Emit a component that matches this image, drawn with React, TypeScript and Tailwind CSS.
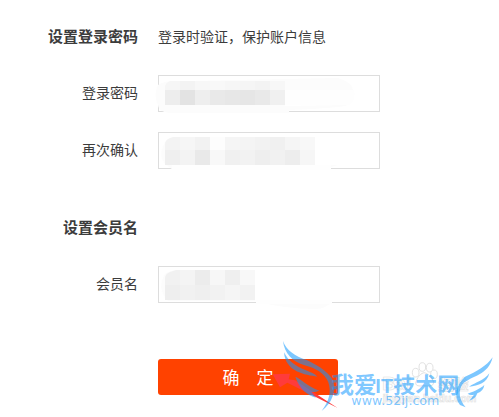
import { useId } from 'react';

type Block = [x: number, y: number, w: number, h: number, fill: string];

const shades = (y: number, h: number, fills: string[]): Block[] =>
  fills.map((fill, i) => [7 + i * 15, y, 15, h, fill]);

const passwordBlocks: Block[] = [
  ...shades(6, 9, ['#f6f6f6', '#f3f3f3', '#f7f7f7', '#f8f8f8', '#f6f6f6', '#f5f5f5', '#f3f3f3', '#f7f7f7']),
  ...shades(15, 15, ['#ededed', '#e3e3e3', '#eeeeee', '#e9e9e9', '#e7e7e7', '#e6e6e6', '#e9e9e9', '#f0f0f0']),
];
const confirmBlocks: Block[] = [
  ...shades(5, 13, ['#f3f3f3', '#f6f6f6', '#f2f2f2', '#fdfdfd', '#f5f5f5', '#f4f4f4', '#f2f2f2', '#f0f0f0', '#f5f5f5', '#f8f8f8']),
  ...shades(18, 15, ['#efefef', '#f3f3f3', '#e9e9e9', '#f8f8f8', '#f0f0f0', '#f2f2f2', '#eeeeee', '#f1f1f1', '#ededed', '#f6f6f6']),
];
const memberBlocks: Block[] = [
  ...shades(4, 15, ['#f1f1f1', '#f4f4f4', '#ececec', '#f7f7f7', '#efefef', '#f8f8f8']),
  ...shades(19, 15, ['#eeeeee', '#f1f1f1', '#efefef', '#f2f2f2', '#f5f5f5', '#f2f2f2']),
];

interface FieldProps {
  label: string;
  type: string;
  smudge: string;
  cover: string;
  blocks: Block[];
}

function Field({ label, type, smudge, cover, blocks }: FieldProps) {
  const id = useId();
  return (
    <div className="flex items-center gap-5">
      <label htmlFor={id} className="w-[138px] shrink-0 pb-1 text-right">{label}</label>
      <div className="relative w-full max-w-[222px]">
        <input id={id} type={type} className="block h-[37px] w-full border border-[#dddddd] bg-white px-2 outline-none" />
        <svg viewBox="0 0 222 37" width="222" height="37" className="pointer-events-none absolute top-0 left-0 overflow-visible" aria-hidden="true">
          <path d={smudge} fill="#fcfcfc" />
          <path d={cover} fill="#fefefe" />
          <clipPath id={id + 'c'}>
            <path d="M7 40V12Q7 8 12 6L18 4H222V40Z" />
          </clipPath>
          <g clipPath={'url(#' + id + 'c)'} shapeRendering="crispEdges">
            {blocks.map(([x, y, w, h, fill], i) => (
              <rect key={i} x={x} y={y} width={w} height={h} fill={fill} />
            ))}
          </g>
        </svg>
      </div>
    </div>
  );
}

function Watermark() {
  return (
    <svg viewBox="0 0 687 261" width="229" height="87" className="pointer-events-none absolute top-[330px] left-[270px]" aria-hidden="true">
      <path d="M8 133L60 131L56 148L75 151L203 234L112 188L52 158L30 172Z" fill="#ff3b3b" />
      <g fill="#fff" stroke="#e2e2e2" strokeWidth="3">
        <ellipse cx="437" cy="128" rx="10" ry="13" />
        <ellipse cx="457" cy="111" rx="10" ry="13" />
        <ellipse cx="479" cy="113" rx="10" ry="13" />
        <ellipse cx="492" cy="133" rx="10" ry="13" />
        <path d="M462 128C445 133 439 151 437 160Q438 171 462 167Q490 172 491 158C488 145 475 130 462 128Z" />
      </g>
      <g fill="#fff" stroke="#e2e2e2" strokeWidth="2" fontFamily='"Liberation Sans", "Noto Sans CJK SC", sans-serif' fontWeight="700">
        <text x="337" y="180" fontSize="56">Bai</text>
        <text x="504" y="180" fontSize="46">经验</text>
        <text x="338" y="216" fontSize="32">jingyan.baidu.com</text>
      </g>
      <g fill="#1099ff" fillOpacity=".55">
        <path d="M39 33C50 62 74 78 110 90C151 109 181 131 190 154C198 184 187 219 155 243C179 211 184 184 175 157C163 128 137 115 104 106C68 96 43 70 39 33Z" />
        <path d="M42 67C55 93 77 109 108 121C122 127 134 131 142 140C106 135 46 126 42 67Z" />
        <path d="M76 140C93 146 112 169 148 182C137 186 131 187 124 185L138 203C115 198 87 176 76 140Z" />
        <path d="M668 82C650 108 620 125 585 140C558 165 550 200 570 225L587 232C568 212 562 180 580 160C605 138 655 136 668 82Z" />
        <path d="M658 130C642 151 617 157 597 170C625 168 652 158 658 130Z" />
        <path d="M643 165C627 179 607 186 593 191Q600 197 612 194L598 212Q616 208 622 190Q640 184 643 165Z" />
        <g fontFamily='"Liberation Sans", "Noto Sans CJK SC", sans-serif' fontWeight="700">
          <text x="184" y="189" fontSize="68">我爱</text>
          <text x="316" y="188" fontSize="60">IT</text>
          <text x="370" y="189" fontSize="66">技术网</text>
        </g>
        <text x="244" y="226" fontSize="38" fontFamily='"DejaVu Sans", sans-serif'>www.52ij.com</text>
      </g>
    </svg>
  );
}

export default function App() {
  return (
    <main className="relative min-h-screen overflow-hidden bg-white pt-6 pb-5 font-['Noto_Sans_CJK_SC','Liberation_Sans',sans-serif] text-sm leading-6 text-[#3c3c3c]">
      <form onSubmit={(e) => e.preventDefault()}>
        <section>
          <div className="flex items-center gap-5">
            <h2 className="w-[138px] shrink-0 text-right text-[15px] font-bold">设置登录密码</h2>
            <p>登录时验证，保护账户信息</p>
          </div>
          <div className="mt-[27px] flex flex-col gap-5">
            <Field
              label="登录密码"
              type="password"
              blocks={passwordBlocks}
              smudge="M0 10Q8 5 25 6L127 4L180 3Q194 7 195 15H127V31L190 30Q184 33 131 35V38H15Q1 38 0 30Q-5 20 0 10Z"
              cover="M127 15H196Q199 24 190 30H127Z"
            />
            <Field
              label="再次确认"
              type="password"
              blocks={confirmBlocks}
              smudge="M6 12Q10 5 24 5H157V33H180L173 35V38H15L10 34Q-1 26 6 12Z"
              cover="M14 33H173V38H14Z"
            />
          </div>
        </section>
        <section className="mt-[46px]">
          <h2 className="w-[138px] text-right text-[15px] font-bold">设置会员名</h2>
          <div className="mt-[27px]">
            <Field
              label="会员名"
              type="text"
              blocks={memberBlocks}
              smudge="M7 8Q12 4 20 4H97V35H174Q168 43 158 43Q126 43 98 35H10Q-2 22 7 8Z"
              cover="M98 34H174V38H98Z"
            />
          </div>
        </section>
        <button type="submit" className="mt-14 ml-[158px] h-9 w-[180px] rounded-[3px] bg-[#ff4200] text-[17px] text-white">确　定</button>
      </form>
      <Watermark />
    </main>
  );
}
